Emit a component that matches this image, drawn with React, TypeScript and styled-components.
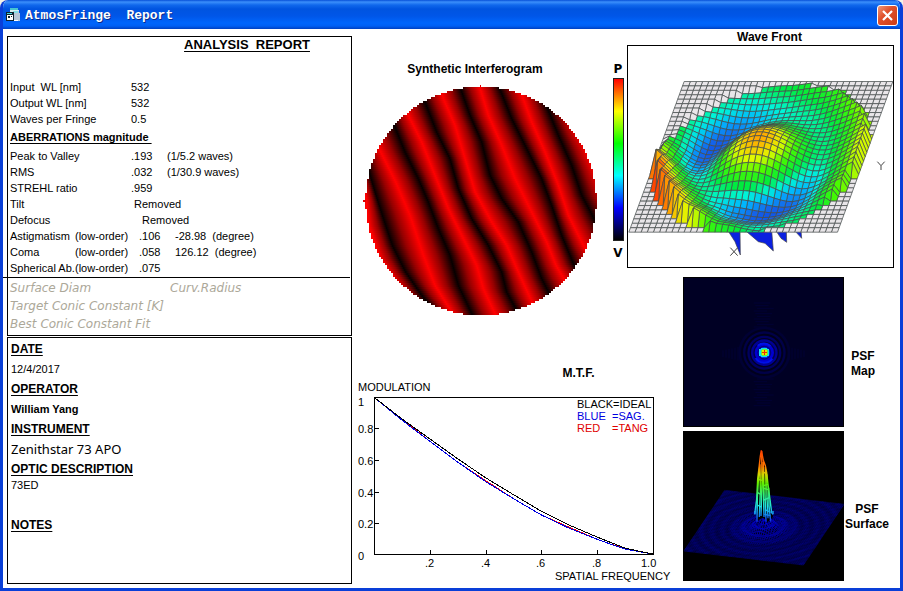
import React from "react";
import styled, { createGlobalStyle } from "styled-components";

const GlobalStyle = createGlobalStyle`
  *, *::before, *::after { box-sizing: border-box; }
  html, body, #root { height: 100%; }
  body { margin: 0; background: #f4f2e8; color: #000; font-family: "Liberation Sans", Arial, sans-serif; font-size: 11px; }
`;

/* ---------- window frame ---------- */

const Window = styled.div`
  min-height: 100%;
  display: flex;
  flex-direction: column;
  border: solid #0a3fd8;
  border-width: 0 3px 3px;
  border-radius: 8px 8px 0 0;
  background: #fff;
  overflow: hidden;
`;

const TitleBar = styled.header`
  flex: none;
  height: 29px;
  margin: 0 -3px;
  padding: 2px 5px 0 6px;
  display: flex;
  align-items: center;
  gap: 4px;
  background: linear-gradient(#0650d8 0, #3b8ffb 2px, #1068ec 5px, #0054e0 9px, #0056e8 16px, #0066fc 23px, #0060f4 26px, #0040c0 29px);
`;

const TitleText = styled.h1`
  margin: 0;
  flex: 1;
  color: #fff;
  font: bold 13px/16px "Liberation Mono", monospace;
  white-space: pre;
  text-shadow: 1px 1px 0 #0b2c8a;
`;

const CloseButton = styled.button`
  width: 21px;
  height: 21px;
  padding: 0;
  border: 1px solid #fff;
  border-radius: 3px;
  background: linear-gradient(135deg, #f09878, #e0512c 40%, #cc3c14);
  display: grid;
  place-items: center;
`;

const Body = styled.main`
  flex: 1;
  display: grid;
  grid-template-columns: minmax(0, 349fr) minmax(0, 548fr);
`;

/* ---------- report column ---------- */

const ReportColumn = styled.div`
  padding: 7px 0 4px 4px;
  display: flex;
  flex-direction: column;
  gap: 1px;
`;

const Box = styled.section`
  border: 1px solid #000;
  padding: 0 3px 2px 2px;
  white-space: pre;
`;

const DetailsBox = styled(Box)`
  flex: 1;
  padding: 1px 3px;
`;

const ReportTitle = styled.h2`
  margin: 0 0 26px;
  padding-left: 136px;
  text-align: center;
  font-size: 13px;
  line-height: 16px;
  text-decoration: underline;
  text-underline-offset: 2px;
`;

const GroupTitle = styled.h3`
  margin: 1px 0 2px;
  font-size: 11px;
  line-height: 18px;
  text-decoration: underline;
  text-underline-offset: 2px;
`;

const Values = styled.table<{ $label: number }>`
  border-collapse: collapse;
  font-size: 11px;
  line-height: 16px;
  th, td { padding: 0; font-weight: normal; text-align: left; }
  th { width: ${(p) => p.$label}px; }
  td { width: 36px; }
  td[colspan] { width: auto; }
  td + td { width: auto; }
`;

const Rule = styled.hr`
  margin: 1px -2px 1px -7px;
  border: 0;
  border-top: 1px solid #000;
`;

const Disabled = styled.div`
  display: grid;
  grid-template-columns: 160px 1fr;
  font: italic 12px/18px "DejaVu Sans", Verdana, sans-serif;
  color: #aca899;
`;

const Details = styled.dl`
  margin: 0;
`;

const Term = styled.dt<{ $spaced?: boolean }>`
  margin-top: ${(p) => (p.$spaced ? 24 : 0)}px;
  font-size: 12px;
  font-weight: bold;
  line-height: 20px;
  text-decoration: underline;
  text-underline-offset: 2px;
`;

const Entry = styled.dd<{ $kind?: "strong" | "large" | "tight" }>`
  margin: 0;
  font-family: ${(p) => (p.$kind === "large" ? '"Noto Sans"' : '"Liberation Sans"')}, sans-serif;
  font-size: ${(p) => (p.$kind === "large" ? 13 : 11)}px;
  font-weight: ${(p) => (p.$kind === "strong" ? "bold" : "normal")};
  line-height: ${(p) => (p.$kind === "tight" ? 12 : 20)}px;
`;

/* ---------- figures ---------- */

const Figures = styled.div`
  display: grid;
  grid-template-columns: minmax(0, 275fr) minmax(0, 56fr) minmax(0, 217fr);
  grid-template-rows: auto auto 1fr;
`;

const Caption = styled.h2`
  margin: 0;
  font-size: 12px;
  line-height: 16px;
  text-align: center;
`;

const Drawing = styled.svg`
  display: block;
  width: 100%;
  height: auto;
`;

const InterferogramPanel = styled.section`
  grid-area: 1 / 1 / 3 / 2;
  padding: 32px 4px 0 11px;
  display: grid;
  grid-template-columns: minmax(0, 1fr) 10px;
  gap: 16px;
  align-items: start;
`;

const InterferogramCaption = styled(Caption)`
  padding-right: 10px;
  margin-bottom: 7px;
`;

const Scale = styled.div`
  display: flex;
  flex-direction: column;
  align-items: center;
  font: bold 12px/17px "DejaVu Sans", sans-serif;
`;

const ScaleBar = styled.div`
  width: 11px;
  height: 163px;
  margin-bottom: 4px;
  border: 1px solid #222;
  background: linear-gradient(#f00, #ff0 20%, #0f0 40%, #0ff 60%, #00f 80%, #000);
`;

const WavePanel = styled.section`
  grid-area: 1 / 2 / 2 / 4;
  padding: 0 6px 0 0;
`;

const WaveCaption = styled(Caption)`
  padding-left: 18px;
`;

const MtfPanel = styled.section`
  grid-area: 3 / 1 / 4 / 3;
  align-self: end;
  padding-bottom: 3px;
`;

const MtfCaption = styled(Caption)`
  padding-left: 122px;
`;

const PsfPanel = styled.section`
  grid-area: 2 / 3 / 4 / 4;
  padding-top: 9px;
  display: flex;
  flex-direction: column;
  gap: 4px;
`;

const PsfRow = styled.div`
  display: grid;
  grid-template-columns: minmax(0, 161fr) minmax(0, 56fr);
  align-items: center;
`;

const PsfCaption = styled(Caption)<{ $wide?: boolean }>`
  padding-top: ${(p) => (p.$wide ? 22 : 24)}px;
  padding-right: ${(p) => (p.$wide ? 10 : 18)}px;
  line-height: 15px;
`;

/* ---------- icons ---------- */

const FormIcon = () => (
  <svg width="15" height="15" viewBox="0 0 15 15" shapeRendering="crispEdges" aria-hidden="true">
    <path d="M4 0h8v2h1v8H4z" fill="#d8eef2" />
    <path d="M4 0h8v2H4z" fill="#48c4d0" />
    <path d="M7 3h6v2h1v8H7z" fill="#b8c8d8" />
    <path d="M7 3h5v2H7z" fill="#86e0e4" />
    <path d="M0 4h8v9H0z" fill="#102430" />
    <path d="M1 7h6v5H1z" fill="#fff" />
    <path d="M1 5h5v1H1z" fill="#43d8df" />
    <path d="M2 8h2v2H2zM5 8h1v1H5z" fill="#102430" />
    <path d="M8 12h4v1H8z" fill="#fff" />
  </svg>
);

const CloseIcon = () => (
  <svg width="13" height="13" viewBox="0 0 13 13" aria-hidden="true">
    <path d="M2 2l9 9M11 2l-9 9" stroke="#fff" strokeWidth="2.2" />
  </svg>
);

/* ---------- interferogram ---------- */

type Pt = [number, number];

const fringes: { bright: boolean; pts: Pt[] }[] = [
  { bright: true, pts: [[15, 340], [34, 430], [42, 510], [75, 610], [130, 690], [180, 760]] },
  { bright: false, pts: [[36, 330], [60, 410], [82, 480], [112, 570], [152, 650], [200, 720], [245, 775]] },
  { bright: true, pts: [[55, 240], [77, 290], [122, 380], [165, 480], [205, 600], [240, 690], [290, 770]] },
  { bright: false, pts: [[105, 170], [120, 215], [150, 290], [190, 370], [220, 440], [250, 520], [285, 600], [310, 690], [350, 775]] },
  { bright: true, pts: [[140, 130], [160, 180], [200, 260], [240, 360], [280, 460], [320, 540], [365, 630], [385, 700], [420, 775]] },
  { bright: false, pts: [[195, 95], [210, 140], [245, 230], [285, 310], [310, 400], [350, 490], [400, 570], [440, 650], [455, 710], [490, 775]] },
  { bright: true, pts: [[255, 95], [265, 130], [300, 210], [330, 310], [360, 410], [410, 500], [455, 570], [490, 650], [540, 760]] },
  { bright: false, pts: [[315, 95], [345, 180], [380, 260], [405, 360], [440, 430], [490, 500], [530, 590], [560, 670], [600, 750]] },
  { bright: true, pts: [[374, 95], [400, 180], [440, 270], [480, 370], [530, 470], [575, 560], [603, 630], [650, 710]] },
  { bright: false, pts: [[432, 95], [470, 190], [520, 290], [560, 370], [590, 450], [620, 540], [655, 625], [700, 690]] },
  { bright: true, pts: [[492, 95], [530, 200], [570, 290], [610, 390], [640, 480], [685, 570], [730, 640]] },
  { bright: false, pts: [[555, 95], [580, 165], [610, 240], [650, 330], [680, 420], [720, 495], [770, 580]] },
  { bright: true, pts: [[625, 95], [650, 200], [690, 275], [725, 360], [760, 440], [800, 520]] },
];

const xAt = (pts: Pt[], y: number) => {
  let i = 0;
  while (i < pts.length - 2 && pts[i + 1][1] < y) i++;
  const [x0, y0] = pts[i];
  const [x1, y1] = pts[i + 1];
  return x0 + ((x1 - x0) * (y - y0)) / (y1 - y0);
};

const scanlines = Array.from({ length: 114 }, (_, i) => {
  const y = 95 + i * 6;
  const mid = y + 3;
  const half = 346 * Math.sqrt(Math.max(0, 1 - ((mid - 437) / 343) ** 2));
  const snapped = Math.round(half / 6) * 6;
  const centers = fringes.map((f) => ({ x: xAt(f.pts, mid), bright: f.bright }));
  for (let k = 1; k < centers.length; k++) centers[k].x = Math.max(centers[k].x, centers[k - 1].x + 8);
  const stops = centers.flatMap((c, k) => {
    const own = { x: c.x, color: c.bright ? "#ff0000" : "#060000" };
    const next = centers[k + 1];
    return next ? [own, { x: (c.x + next.x) / 2, color: "#960000" }] : [own];
  });
  return { y, x: 377 - snapped, w: snapped * 2, stops };
});

const SCAN_START = -600;
const SCAN_SPAN = 2100;

const Interferogram = () => (
  <Drawing viewBox="24 87 702 696" shapeRendering="crispEdges" role="img" aria-label="Synthetic interferogram">
    <defs>
      {scanlines.map((s, i) => (
        <linearGradient key={i} id={`scan${i}`} gradientUnits="userSpaceOnUse" x1={SCAN_START} x2={SCAN_START + SCAN_SPAN} y1="0" y2="0">
          {s.stops.map((p, k) => (
            <stop key={k} offset={(p.x - SCAN_START) / SCAN_SPAN} stopColor={p.color} />
          ))}
        </linearGradient>
      ))}
    </defs>
    {scanlines.map((s, i) => (
      <rect key={i} x={s.x} y={s.y} width={s.w} height="6" fill={`url(#scan${i})`} />
    ))}
    <path d="M375 90h3v6h-3zM24 435h8v6h-8z" fill="#e00000" />
  </Drawing>
);

/* ---------- wave front surface ---------- */

const ramp: [number, number[]][] = [
  [-64, [0, 40, 230]],
  [-44, [20, 100, 235]],
  [-30, [0, 180, 255]],
  [-16, [0, 245, 215]],
  [0, [0, 235, 60]],
  [22, [70, 250, 0]],
  [42, [225, 250, 0]],
  [62, [255, 170, 0]],
  [80, [255, 20, 0]],
];

const heightColor = (h: number) => {
  let i = 0;
  while (i < ramp.length - 2 && ramp[i + 1][0] < h) i++;
  const [h0, c0] = ramp[i];
  const [h1, c1] = ramp[i + 1];
  const t = Math.min(1, Math.max(0, (h - h0) / (h1 - h0)));
  return `rgb(${c0.map((c, k) => Math.round(c + (c1[k] - c) * t)).join(",")})`;
};

const rim: Pt[] = [
  [0, 58], [35, 38], [65, 16], [90, 4], [115, -8], [145, -6], [165, 14], [182, 54],
  [198, 94], [222, 90], [242, 56], [262, 18], [285, -6], [310, 0], [335, 36], [360, 58],
];

const rimAt = (deg: number) => {
  let i = 0;
  while (i < rim.length - 2 && rim[i + 1][0] < deg) i++;
  const t = (deg - rim[i][0]) / (rim[i + 1][0] - rim[i][0]);
  const s = t * t * (3 - 2 * t);
  return rim[i][1] + (rim[i + 1][1] - rim[i][1]) * s;
};

const lobe = (rad: number, deg: number) => Math.max(0, Math.cos(rad - (deg * Math.PI) / 180)) ** 2;

const surface = (u: number, v: number) => {
  const r = Math.hypot(u, v);
  const rad = Math.atan2(v, u);
  const deg = ((rad * 180) / Math.PI + 360) % 360;
  const bump = 64 * Math.exp(-((Math.hypot(u + 0.03, v) / 0.36) ** 2));
  const trough = 18 + 34 * lobe(rad, 290) + 36 * lobe(rad, 158);
  return bump - trough * Math.exp(-(((r - 0.59) / 0.24) ** 2)) + rimAt(deg) * Math.min(1, r ** 3.4);
};

const N = 34;
const waveCells: { d: string; fill: string }[] = [];
for (let j = N - 1; j >= 0; j--) {
  for (let i = N - 1; i >= 0; i--) {
    const corners = [[i, j], [i + 1, j], [i + 1, j + 1], [i, j + 1]].map(([a, b]) => {
      const u = (a / N) * 2 - 1;
      const v = (b / N) * 2 - 1;
      const inside = Math.hypot(u, v) <= 0.985;
      const h = inside ? surface(u, v) : 0;
      return { u, v, inside, h, x: 407.5 + 313 * u + 83 * v, y: 395.5 - 226 * v - h };
    });
    const within = corners.filter((c) => c.inside);
    const back = corners[0].v > 0.05 && corners[0].u < 0.5;
    const grey = within.length === 0 || (within.length < 4 && back);
    const mean = within.reduce((s, c) => s + c.h, 0) / (within.length || 1);
    waveCells.push({
      d: `M${corners.map((c) => `${c.x.toFixed(1)} ${c.y.toFixed(1)}`).join("L")}Z`,
      fill: grey ? "#e9e6e9" : heightColor(mean * (within.length < 4 ? 0.9 : 1)),
    });
  }
}

const WaveFront = () => (
  <Drawing viewBox="6 60 801 669" role="img" aria-label="Wave front surface">
    <rect x="7.5" y="61.5" width="798" height="666" fill="#fff" stroke="#000" strokeWidth="3" />
    <g fill="#0a20e0" stroke="#444" strokeWidth="2">
      <path d="M308 616L345 616L346 690L330 650Z" />
      <path d="M360 616L440 616L445 678L420 655L400 650Z" />
      <path d="M452 616L484 616L485 652L468 640Z" />
      <path d="M508 616L528 616L530 640Z" />
    </g>
    <g stroke="#444c4c" strokeWidth="2.2" strokeLinejoin="round">
      {waveCells.map((c, i) => (
        <path key={i} d={c.d} fill={c.fill} />
      ))}
    </g>
    <g fill="none" stroke="#444" strokeWidth="3">
      <path d="M316 668l22 24M338 668l-22 24" />
      <path d="M757 410l11 12l11-12M768 422v13" />
    </g>
  </Drawing>
);

/* ---------- point spread function ---------- */

const rings: [number, string][] = [
  [78, "#000034"], [70, "#00001c"], [64, "#000048"], [57, "#00001c"], [51, "#000060"],
  [44, "#000024"], [40, "#000094"], [33, "#000050"], [29, "#0000d0"], [21, "#000080"], [17, "#0030f0"],
];

const PsfMap = () => (
  <Drawing viewBox="0 0 483 450" role="img" aria-label="Point spread function map">
    <rect width="483" height="450" fill="#000" />
    <rect x="3" y="3" width="477" height="444" fill="#000024" />
    <g stroke="#00003c" strokeWidth="2">
      {Array.from({ length: 13 }, (_, i) => (
        <path key={i} d={`M${212 + (i % 3) * 5} ${78 + i * 8}h${50 - (i % 2) * 10}M${212 + (i % 3) * 5} ${290 + i * 8}h${50 - (i % 2) * 10}`} />
      ))}
      {Array.from({ length: 6 }, (_, i) => (
        <path key={i} d={`M${120 + i * 9} ${220 - i * 2}v${20 + i * 4}M${318 + i * 9} ${210 + i * 2}v${40 - i * 4}`} />
      ))}
    </g>
    {rings.map(([r, fill]) => (
      <circle key={r} cx="244" cy="227" r={r} fill={fill} />
    ))}
    <path d="M224 206a30 30 0 0 1 38 1M218 243a30 30 0 0 0 50 2" fill="none" stroke="#0010e8" strokeWidth="6" />
    <g shapeRendering="crispEdges">
      <path d="M235 213h18v3h6v21h-6v3h-18v-3h-6v-21h6z" fill="#18dcf0" />
      <path d="M238 216h15v3h3v15h-3v3h-15v-3h-3v-15h3z" fill="#60f040" />
      <path d="M238 219h15v15h-15z" fill="#e8e800" />
      <path d="M244 219h3v6h6v3h-6v6h-3v-6h-6v-3h6z" fill="#f03000" />
    </g>
  </Drawing>
);

const M = 60;
const meshCells: { d: string; stroke: string }[] = [];
for (let j = 0; j < M; j++) {
  for (let i = 0; i < M; i++) {
    const pts = [[i, j], [i + 1, j], [i + 1, j + 1], [i, j + 1]].map(([a, b]) => {
      const s = a / M;
      const t = b / M;
      const r = Math.hypot(s - 0.5, t - 0.5);
      const h = 11 * Math.cos(r * 75) * Math.exp(-r * 8) + 12 * Math.exp(-((r / 0.1) ** 2));
      return { r, x: 125 + 358 * s - 122 * t, y: 178 + 42 * s + 182 * t - h };
    });
    const glow = Math.max(0, 1 - pts[0].r / 0.3);
    const ripple = Math.cos(pts[0].r * 75) * 18;
    const shade = (i * 7 + j * 3) % 4;
    meshCells.push({
      d: `M${pts.map((p) => `${p.x.toFixed(1)} ${p.y.toFixed(1)}`).join("L")}Z`,
      stroke: `rgb(0,0,${Math.round(98 + ripple + shade * 10 + glow * 120)})`,
    });
  }
}

const PsfSurface = () => (
  <Drawing viewBox="0 0 483 450" role="img" aria-label="Point spread function surface">
    <defs>
      <linearGradient id="peak" gradientUnits="userSpaceOnUse" x1="0" x2="0" y1="58" y2="275">
        <stop offset="0" stopColor="#ff4000" />
        <stop offset=".22" stopColor="#ff7800" />
        <stop offset=".33" stopColor="#d8d800" />
        <stop offset=".46" stopColor="#60f000" />
        <stop offset=".62" stopColor="#30f080" />
        <stop offset=".78" stopColor="#20e0e8" />
        <stop offset=".9" stopColor="#1080f0" />
        <stop offset="1" stopColor="#1020e0" />
      </linearGradient>
    </defs>
    <rect width="483" height="450" fill="#000" />
    <g fill="#000018" strokeWidth="1.8">
      {meshCells.map((c, i) => (
        <path key={i} d={c.d} stroke={c.stroke} />
      ))}
    </g>
    <path d="M221 270L225 150L235 58L246 100L256 140L270 258L255 272L240 260Z" fill="#000" />
    <g fill="none" stroke="url(#peak)" strokeWidth="4.2">
      <path d="M215 250L221 205L224 145L232 75L235 58L241 88L247 104L251 125L255 160L261 205L266 245L270 250" />
      <path d="M222 272L223 200L227 135L231 100L232 180L229 258" />
      <path d="M236 60L237 150L234 255M241 92L241 170L243 258" />
      <path d="M247 108L246 190L249 272M251 130L252 200L255 262M257 170L258 225L263 272" />
      <path d="M225 145L237 148M238 122L250 128M241 164L255 160M224 185L233 190M243 172L255 176M240 208L259 200M223 222L234 228M246 236L263 244M244 250L262 254" />
      <path d="M216 240v10M270 240v10" />
    </g>
  </Drawing>
);

/* ---------- modulation transfer chart ---------- */

const mtf: Pt[] = [
  [375, 398], [402, 419], [430, 439], [458, 459], [486, 478], [514, 495], [541, 511], [569, 525], [597, 537], [612, 543], [625, 548], [638, 551], [653, 554],
];

const curve = (offset: number, wobble: number) =>
  mtf
    .map(([x, y], i) => {
      const t = (x - 375) / 278;
      const sag = offset * Math.sin(Math.PI * Math.min(1, t * 1.02)) + (i % 3 === 1 ? wobble : 0);
      return `${i ? "L" : "M"}${x} ${y + (i === 0 || i === mtf.length - 1 ? 0 : sag)}`;
    })
    .join("");

const ChartText = styled.text`
  font: 11px "Liberation Sans", Arial, sans-serif;
  white-space: pre;
`;

const yTicks: [string, number][] = [["0.8", 428], ["0.6", 460], ["0.4", 492], ["0.2", 523]];
const xTicks: [string, number][] = [[".2", 430], [".4", 486], [".6", 541], [".8", 597]];

const MtfChart = () => (
  <Drawing viewBox="352 381 331 204" role="img" aria-label="Modulation transfer function">
    <rect x="374.5" y="397.5" width="279" height="157" fill="none" stroke="#000" shapeRendering="crispEdges" />
    <ChartText x="358" y="391">MODULATION</ChartText>
    <ChartText x="358" y="406">1</ChartText>
    <ChartText x="358" y="560">0</ChartText>
    {yTicks.map(([label, y]) => (
      <React.Fragment key={label}>
        <ChartText x="358" y={y + 5}>{label}</ChartText>
        <path d={`M375 ${y}.5h4`} stroke="#000" />
      </React.Fragment>
    ))}
    {xTicks.map(([label, x]) => (
      <React.Fragment key={label}>
        <ChartText x={x - 5} y="567">{label}</ChartText>
        <path d={`M${x}.5 550v4`} stroke="#000" />
      </React.Fragment>
    ))}
    <ChartText x="641" y="567">1.0</ChartText>
    <ChartText x="555" y="580">SPATIAL FREQUENCY</ChartText>
    <g fill="none" strokeWidth="1" shapeRendering="crispEdges">
      <path d={curve(4, -1)} stroke="#f00000" />
      <path d={curve(4, 0)} stroke="#0000e0" />
      <path d={curve(0, 0)} stroke="#000" />
    </g>
    <ChartText x="577" y="408">BLACK=IDEAL</ChartText>
    <ChartText x="577" y="420" fill="#0000e0">BLUE</ChartText>
    <ChartText x="612" y="420" fill="#0000e0">=SAG.</ChartText>
    <ChartText x="577" y="432" fill="#e00000">RED</ChartText>
    <ChartText x="612" y="432" fill="#e00000">=TANG</ChartText>
  </Drawing>
);

/* ---------- data ---------- */

type Row = { label: string; order?: string; value: string; note?: string };

const inputs: Row[] = [
  { label: "Input  WL [nm]", value: "532" },
  { label: "Output WL [nm]", value: "532" },
  { label: "Waves per Fringe", value: "0.5" },
];

const totals: Row[] = [
  { label: "Peak to Valley", value: ".193", note: "(1/5.2 waves)" },
  { label: "RMS", value: ".032", note: "(1/30.9 waves)" },
  { label: "STREHL ratio", value: ".959" },
  { label: "Tilt", value: " Removed" },
];

const lowOrder: Row[] = [
  { label: "Defocus", value: " Removed" },
  { label: "Astigmatism", order: "(low-order)", value: ".106", note: "-28.98  (degree)" },
  { label: "Coma", order: "(low-order)", value: ".058", note: "126.12  (degree)" },
  { label: "Spherical Ab.", order: "(low-order)", value: ".075" },
];

const OrderLabel = styled.span`
  display: grid;
  grid-template-columns: 65px 1fr;
`;

const ValueRows = ({ rows, label }: { rows: Row[]; label: number }) => (
  <Values $label={label}>
    <tbody>
      {rows.map((row) => (
        <tr key={row.label}>
          <th scope="row">
            {row.order ? (
              <OrderLabel>
                <span>{row.label}</span>
                <span>{row.order}</span>
              </OrderLabel>
            ) : (
              row.label
            )}
          </th>
          {row.note ? (
            <>
              <td>{row.value}</td>
              <td>{row.note}</td>
            </>
          ) : (
            <td colSpan={2}>{row.value}</td>
          )}
        </tr>
      ))}
    </tbody>
  </Values>
);

export default function App() {
  return (
    <>
      <GlobalStyle />
      <Window>
        <TitleBar>
          <FormIcon />
          <TitleText>AtmosFringe  Report</TitleText>
          <CloseButton type="button" aria-label="Close">
            <CloseIcon />
          </CloseButton>
        </TitleBar>
        <Body>
          <ReportColumn>
            <Box>
              <ReportTitle>ANALYSIS  REPORT</ReportTitle>
              <ValueRows rows={inputs} label={121} />
              <GroupTitle>ABERRATIONS magnitude </GroupTitle>
              <ValueRows rows={totals} label={121} />
              <ValueRows rows={lowOrder} label={129} />
              <Rule />
              <Disabled>
                <span>Surface Diam</span>
                <span>Curv.Radius</span>
              </Disabled>
              <Disabled>Target Conic Constant [K]</Disabled>
              <Disabled>Best Conic Constant Fit</Disabled>
            </Box>
            <DetailsBox>
              <Details>
                <Term>DATE</Term>
                <Entry>12/4/2017</Entry>
                <Term>OPERATOR</Term>
                <Entry $kind="strong">William Yang</Entry>
                <Term>INSTRUMENT</Term>
                <Entry $kind="large">Zenithstar 73 APO</Entry>
                <Term>OPTIC DESCRIPTION</Term>
                <Entry $kind="tight">73ED</Entry>
                <Term $spaced>NOTES</Term>
              </Details>
            </DetailsBox>
          </ReportColumn>
          <Figures>
            <InterferogramPanel>
              <div>
                <InterferogramCaption>Synthetic Interferogram</InterferogramCaption>
                <Interferogram />
              </div>
              <Scale>
                <span>P</span>
                <ScaleBar />
                <span>V</span>
              </Scale>
            </InterferogramPanel>
            <WavePanel>
              <WaveCaption>Wave Front</WaveCaption>
              <WaveFront />
            </WavePanel>
            <PsfPanel>
              <PsfRow>
                <PsfMap />
                <PsfCaption>PSF<br />Map</PsfCaption>
              </PsfRow>
              <PsfRow>
                <PsfSurface />
                <PsfCaption $wide>PSF<br />Surface</PsfCaption>
              </PsfRow>
            </PsfPanel>
            <MtfPanel>
              <MtfCaption>M.T.F.</MtfCaption>
              <MtfChart />
            </MtfPanel>
          </Figures>
        </Body>
      </Window>
    </>
  );
}
